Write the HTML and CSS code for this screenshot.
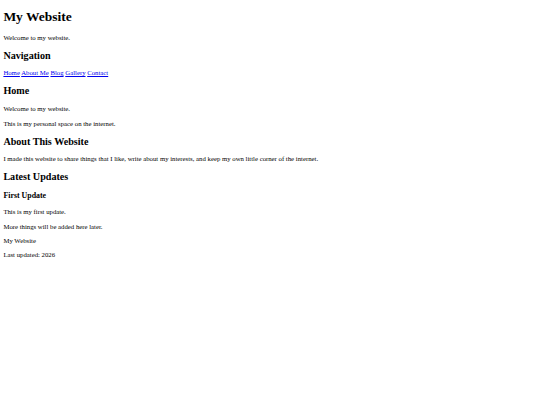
FILE: index.html
```html
<!DOCTYPE html>
<html>
<head>
<meta charset="utf-8">
<title>My Website</title>
<link rel="stylesheet" href="styles.css">
</head>
<body class="page">
<header>
<h1 class="title">My Website</h1>
<p>Welcome to my website.</p>
</header>
<nav>
<h2 class="section-title">Navigation</h2>
<a href="#">Home</a>
<a href="#">About Me</a>
<a href="#">Blog</a>
<a href="#">Gallery</a>
<a href="#">Contact</a>
</nav>
<main>
<section>
<h2 class="section-title">Home</h2>
<p>Welcome to my website.</p>
<p>This is my personal space on the internet.</p>
</section>
<section>
<h2 class="section-title">About This Website</h2>
<p>I made this website to share things that I like, write about my interests, and keep my own little corner of the internet.</p>
</section>
<section>
<h2 class="section-title">Latest Updates</h2>
<article>
<h3 class="update-title">First Update</h3>
<p>This is my first update.</p>
<p>More things will be added here later.</p>
</article>
</section>
</main>
<footer>
<p>My Website</p>
<p>Last updated: 2026</p>
</footer>
</body>
</html>
```
FILE: styles.css
```css
html { background: #fff; }
.page {
  margin: 3.375px;
  font-family: "Liberation Serif", "Times New Roman", serif;
  font-size: 6.75px;
  line-height: 7.6px;
  color: #000;
}
.page p { margin: 6.75px 0; }
.title { font-size: 13.5px; line-height: 15.6px; margin: 5.6px 0 9.05px; }
.section-title { font-size: 10.125px; line-height: 11.4px; margin: 8.4px 0; }
.update-title { font-size: 7.9px; line-height: 9.28px; margin: 7.9px 0; }
a { color: #0000ee; }
```
